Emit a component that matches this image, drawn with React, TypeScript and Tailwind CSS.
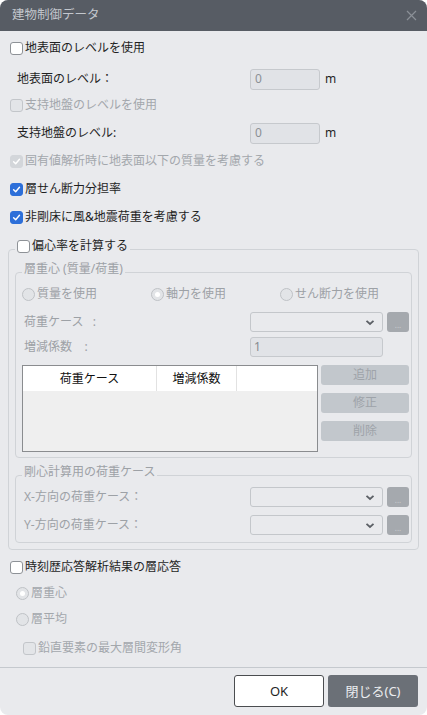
import { ReactNode } from "react";

const FONT = "font-['Noto_Sans','Noto_Sans_CJK_JP',sans-serif]";

function Check({ checked = false, disabled = false }: { checked?: boolean; disabled?: boolean }) {
  const box = checked
    ? disabled
      ? "bg-[#d3d6da] border-[#d3d6da]"
      : "bg-[#2d6fd9] border-[#2d6fd9]"
    : disabled
      ? "bg-[#e3e5e8] border-[#c3c6ca]"
      : "bg-white border-[#8e9297]";
  return (
    <span className={`inline-flex items-center justify-center w-[13px] h-[13px] rounded-[3px] border shrink-0 ${box}`}>
      {checked && (
        <svg width="9" height="9" viewBox="0 0 10 10">
          <path d="M1.8 5.2 L4.1 7.4 L8.3 2.6" fill="none" stroke="white" strokeWidth="1.6" strokeLinecap="round" strokeLinejoin="round" />
        </svg>
      )}
    </span>
  );
}

function Radio({ checked = false }: { checked?: boolean }) {
  return (
    <span className="inline-flex items-center justify-center w-[13px] h-[13px] rounded-full border border-[#bfc2c6] bg-[#e2e4e7] shrink-0">
      {checked && <span className="w-[5px] h-[5px] rounded-full bg-white" />}
    </span>
  );
}

function CheckRow({ label, checked, disabled, className = "" }: { label: string; checked?: boolean; disabled?: boolean; className?: string }) {
  return (
    <div className={`flex items-center h-[22px] gap-[2px] ${className}`}>
      <Check checked={checked} disabled={disabled} />
      <span className={disabled ? "text-[#a3a7ac]" : "text-[#1f1f1f]"}>{label}</span>
    </div>
  );
}

function Select() {
  return (
    <div className="w-[133px] h-[20px] rounded-[3px] border border-[#c4c7cb] bg-[#e9eaed] flex items-center justify-end pr-[7px]">
      <svg width="10" height="7" viewBox="0 0 10 7">
        <path d="M1.5 1.8 L5 5 L8.5 1.8" fill="none" stroke="#5c6066" strokeWidth="1.8" />
      </svg>
    </div>
  );
}

function DotsButton() {
  return (
    <div className="w-[22px] h-[20px] rounded-[3px] bg-[#a5a9ae] flex items-end justify-center pb-[3px] text-[8px] leading-none text-[#c9ccd0]">
      ...
    </div>
  );
}

function Group({ legend, children, className = "", inner = false }: { legend: ReactNode; children: ReactNode; className?: string; inner?: boolean }) {
  return (
    <fieldset className={`border border-[#d0d3d7] rounded-[4px] pl-[6px] ${inner ? "pr-[2px]" : "pr-[6px]"} ${className}`}>
      <legend className="px-[2px] pb-[6px]">
        <div className="h-[16px] flex items-center">{legend}</div>
      </legend>
      {children}
    </fieldset>
  );
}

function SideButton({ label, className = "" }: { label: string; className?: string }) {
  return (
    <div className={`h-[20px] rounded-[3px] bg-[#c2c7cc] text-[#9ea3a9] flex items-center justify-center ${className}`}>
      {label}
    </div>
  );
}

export default function App() {
  return (
    <div className={`w-[427px] h-[715px] bg-white ${FONT} text-[12px] leading-none`}>
      <div className="w-[427px] h-[715px] rounded-[8px] overflow-hidden bg-[#e9eaed] flex flex-col">
        {/* タイトルバー */}
        <div className="h-[31px] bg-[#575c64] flex items-center justify-between pl-[12px] pr-[10px] shrink-0">
          <span className="text-[12.5px] text-[#c3c7cd]">建物制御データ</span>
          <svg width="11" height="11" viewBox="0 0 11 11">
            <path d="M1 1 L10 10 M10 1 L1 10" stroke="#8b9097" strokeWidth="1.2" />
          </svg>
        </div>

        <div className="pl-[10px] pr-[9px]">
          <CheckRow label="地表面のレベルを使用" className="mt-[6px]" />
          <div className="flex items-center h-[22px] mt-[9px] pl-[7px]">
            <span className="w-[233px] text-[#1f1f1f]">地表面のレベル：</span>
            <div className="w-[70px] h-[21px] rounded-[3px] border border-[#c6c9cd] bg-[#e1e3e7] pl-[4px] flex items-center text-[#8c9095]">0</div>
            <span className="ml-[5px] text-[#1f1f1f]">m</span>
          </div>
          <CheckRow label="支持地盤のレベルを使用" disabled className="mt-[4px]" />
          <div className="flex items-center h-[22px] mt-[6px] pl-[7px]">
            <span className="w-[233px] text-[#1f1f1f]">支持地盤のレベル:</span>
            <div className="w-[70px] h-[21px] rounded-[3px] border border-[#c6c9cd] bg-[#e1e3e7] pl-[4px] flex items-center text-[#8c9095]">0</div>
            <span className="ml-[5px] text-[#1f1f1f]">m</span>
          </div>
          <CheckRow label="固有値解析時に地表面以下の質量を考慮する" checked disabled className="mt-[6px]" />
          <CheckRow label="層せん断力分担率" checked className="mt-[6px]" />
          <CheckRow label="非剛床に風&地震荷重を考慮する" checked className="mt-[6px]" />
        </div>

        {/* 偏心率 */}
        <Group
          className="mx-[8px] mt-[10px] pb-[6px]"
          legend={
            <span className="flex items-center gap-[2px]">
              <Check />
              <span className="text-[#1f1f1f]">偏心率を計算する</span>
            </span>
          }
        >
          <Group inner className="mt-[1px] pb-[5px]" legend={<span className="text-[#9da1a6]">層重心 (質量/荷重)</span>}>
            <div className="grid grid-cols-3 h-[22px] items-center text-[#9da1a6]">
              <div className="flex items-center gap-[2px]"><Radio /><span>質量を使用</span></div>
              <div className="flex items-center gap-[2px]"><Radio checked /><span>軸力を使用</span></div>
              <div className="flex items-center gap-[2px]"><Radio /><span>せん断力を使用</span></div>
            </div>
            <div className="flex items-center h-[20px] mt-[7px] text-[#9da1a6]">
              <span className="w-[228px] pl-[2px]">荷重ケース&nbsp;&nbsp;&nbsp;:</span>
              <Select />
              <div className="ml-[4px]"><DotsButton /></div>
            </div>
            <div className="flex items-center h-[20px] mt-[5px] text-[#9da1a6]">
              <span className="w-[228px] pl-[2px]">増減係数&nbsp;&nbsp;&nbsp;&nbsp;:</span>
              <div className="w-[133px] h-[20px] rounded-[3px] border border-[#c6c9cd] bg-[#e1e3e7] pl-[3px] flex items-center text-[#868a8f]">1</div>
            </div>
            <div className="flex mt-[8px] gap-[3px]">
              <div className="w-[296px] h-[87px] border border-[#8a8c8f] bg-[#efefef] flex flex-col">
                <div className="h-[25px] bg-white flex text-[#111]">
                  <div className="w-[134px] flex items-center justify-center border-r border-[#e2e2e2]">荷重ケース</div>
                  <div className="w-[80px] flex items-center justify-center border-r border-[#e2e2e2]">増減係数</div>
                  <div className="flex-1" />
                </div>
              </div>
              <div className="flex-1 flex flex-col">
                <SideButton label="追加" />
                <SideButton label="修正" className="mt-[8px]" />
                <SideButton label="削除" className="mt-[8px]" />
              </div>
            </div>
          </Group>

          <Group inner className="mt-[6px] pb-[7px]" legend={<span className="text-[#9da1a6]">剛心計算用の荷重ケース</span>}>
            <div className="flex items-center h-[20px] mt-[1px] text-[#9da1a6]">
              <span className="w-[228px] pl-[2px]">X-方向の荷重ケース：</span>
              <Select />
              <div className="ml-[4px]"><DotsButton /></div>
            </div>
            <div className="flex items-center h-[20px] mt-[8px] text-[#9da1a6]">
              <span className="w-[228px] pl-[2px]">Y-方向の荷重ケース：</span>
              <Select />
              <div className="ml-[4px]"><DotsButton /></div>
            </div>
          </Group>
        </Group>

        {/* 時刻歴 */}
        <div className="pl-[10px]">
          <CheckRow label="時刻歴応答解析結果の層応答" className="mt-[6px]" />
          <div className="flex items-center h-[22px] mt-[4px] pl-[6px] gap-[2px] text-[#a3a7ac]">
            <Radio checked />
            <span>層重心</span>
          </div>
          <div className="flex items-center h-[22px] mt-[4px] pl-[6px] gap-[2px] text-[#a3a7ac]">
            <Radio />
            <span>層平均</span>
          </div>
          <CheckRow label="鉛直要素の最大層間変形角" disabled className="mt-[7px] pl-[13px]" />
        </div>

        {/* フッター */}
        <div className="mt-[8px] border-t border-[#c5c9ce] pt-[7px] flex justify-end gap-[4px] pr-[9px]">
          <button className="w-[90px] h-[32px] rounded-[3px] border border-[#4b4d50] bg-white text-[13px] text-[#1f1f1f]">OK</button>
          <button className="w-[90px] h-[32px] rounded-[3px] bg-[#6b7077] text-[13px] text-[#eceef0]">閉じる(C)</button>
        </div>
      </div>
    </div>
  );
}
